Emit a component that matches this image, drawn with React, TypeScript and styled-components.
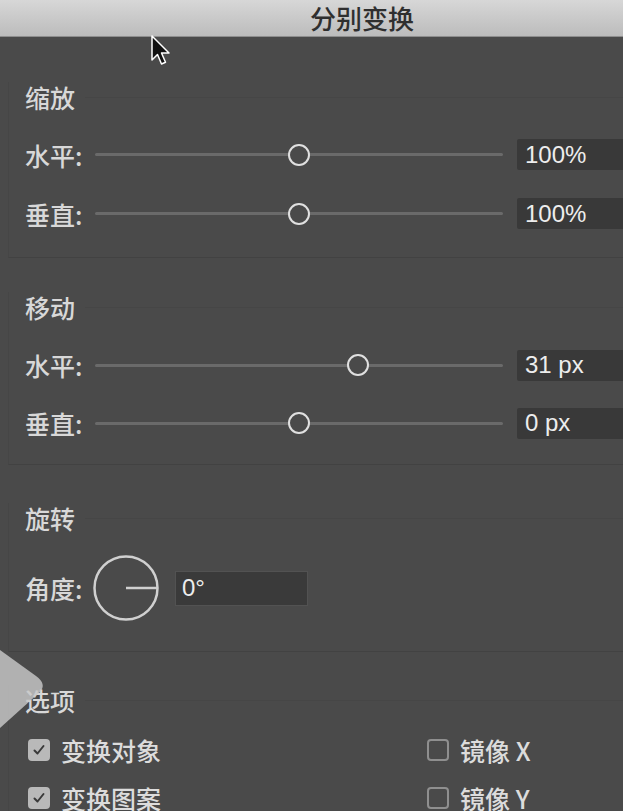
import React from 'react';
import styled, { createGlobalStyle } from 'styled-components';

const GlobalStyle = createGlobalStyle`
  html, body {
    margin: 0;
    padding: 0;
    background: #4a4a4a;
    overflow: hidden;
  }
  body {
    font-family: "Noto Sans CJK SC", "Noto Sans", sans-serif;
  }
`;

const Window = styled.div`
  position: relative;
  width: 724px;
  height: 811px;
  overflow: hidden;
  background: #4a4a4a;
  display: flex;
  flex-direction: column;
`;

const TitleBar = styled.div`
  height: 36px;
  flex-shrink: 0;
  display: flex;
  align-items: center;
  justify-content: center;
  background: linear-gradient(#d7d7d7, #bcbcbc);
  border-bottom: 1px solid #8e8e8e;
  font-size: 26px;
  font-weight: 500;
  color: #2f2f2f;
  line-height: 36px;
`;

const Body = styled.div`
  display: flex;
  flex-direction: column;
  padding-left: 8px;
`;

const Section = styled.section<{ $top: number; $bottom: number }>`
  display: flex;
  flex-direction: column;
  margin-top: ${p => p.$top}px;
  padding: 0 0 ${p => p.$bottom}px 16px;
  border-left: 1px solid #464646;
  border-bottom: 1px solid #424242;
`;

const Header = styled.div<{ $after: number }>`
  display: flex;
  align-items: center;
  gap: 10px;
  height: 30px;
  margin-bottom: ${p => p.$after}px;
  font-size: 25px;
  font-weight: 500;
  line-height: 30px;
  color: #d8d8d8;

  &::after {
    content: '';
    flex: 1;
    height: 1px;
    background: #464646;
  }
`;

const SliderRow = styled.div<{ $h: number }>`
  display: grid;
  grid-template-columns: 70px 408px 134px;
  align-items: center;
  height: ${p => p.$h}px;
`;

const Label = styled.span<{ $w?: number }>`
  font-size: 25px;
  font-weight: 500;
  color: #d8d8d8;
  white-space: nowrap;
  ${p => (p.$w ? `width: ${p.$w}px; flex-shrink: 0;` : '')}
`;

const Track = styled.div`
  position: relative;
  height: 3px;
  border-radius: 2px;
  background: #6a6a6a;
`;

const Thumb = styled.div`
  position: absolute;
  top: 50%;
  width: 22px;
  height: 22px;
  box-sizing: border-box;
  border: 2.5px solid #e0e0e0;
  border-radius: 50%;
  background: #4a4a4a;
  transform: translate(-50%, -50%);
`;

const ValueBox = styled.div`
  height: 31px;
  margin-left: 14px;
  display: flex;
  align-items: center;
  padding-left: 8px;
  background: #393939;
  border-radius: 2px;
  font-family: "Liberation Sans", Arial, sans-serif;
  font-size: 24px;
  color: #ededed;
`;

const AngleRow = styled.div`
  display: flex;
  align-items: center;
  height: 70px;
`;

const AngleBox = styled.div`
  width: 133px;
  height: 35px;
  box-sizing: border-box;
  margin-left: 16px;
  display: flex;
  align-items: center;
  padding-left: 6px;
  background: #3a3a3a;
  border: 1px solid #525252;
  font-family: "Liberation Sans", Arial, sans-serif;
  font-size: 24px;
  color: #ededed;
`;

const Options = styled.div`
  display: grid;
  grid-template-columns: 399px auto;
  grid-auto-rows: 48px;
  margin-left: 3px;
`;

const Check = styled.label`
  display: flex;
  align-items: center;
  gap: 11px;
  font-size: 25px;
  font-weight: 500;
  color: #dcdcdc;
`;

const Box = styled.span<{ $on: boolean }>`
  width: 22px;
  height: 22px;
  box-sizing: border-box;
  border-radius: 4px;
  display: flex;
  align-items: center;
  justify-content: center;
  background: ${p => (p.$on ? '#b9b9b9' : 'transparent')};
  border: 2px solid ${p => (p.$on ? '#b9b9b9' : '#8f8f8f')};
`;

const Cursor = styled.svg`
  position: absolute;
  left: 150px;
  top: 34px;
`;

const PlayShape = styled.svg`
  position: absolute;
  left: 0;
  top: 648px;
`;

type SliderProps = { label: string; value: string; pos: number; h: number };

function Slider({ label, value, pos, h }: SliderProps) {
  return (
    <SliderRow $h={h}>
      <Label>{label}</Label>
      <Track>
        <Thumb style={{ left: `${pos * 100}%` }} />
      </Track>
      <ValueBox>{value}</ValueBox>
    </SliderRow>
  );
}

function Option({ on, text }: { on: boolean; text: string }) {
  return (
    <Check>
      <Box $on={on}>
        {on && (
          <svg width="14" height="14" viewBox="0 0 14 14">
            <path d="M2.5 7.5 L5.5 10.5 L11.5 3" fill="none" stroke="#3a3a3a" strokeWidth="2" strokeLinecap="round" strokeLinejoin="round" />
          </svg>
        )}
      </Box>
      {text}
    </Check>
  );
}

export default function App() {
  return (
    <>
      <GlobalStyle />
      <Window>
        <TitleBar>分别变换</TitleBar>
        <Body>
          <Section $top={45} $bottom={14}>
            <Header $after={13}>缩放</Header>
            <Slider label="水平:" value="100%" pos={0.5} h={59} />
            <Slider label="垂直:" value="100%" pos={0.5} h={59} />
          </Section>

          <Section $top={34} $bottom={12}>
            <Header $after={14}>移动</Header>
            <Slider label="水平:" value="31 px" pos={0.645} h={58} />
            <Slider label="垂直:" value="0 px" pos={0.5} h={58} />
          </Section>

          <Section $top={38} $bottom={28}>
            <Header $after={20}>旋转</Header>
            <AngleRow>
              <Label $w={68}>角度:</Label>
              <svg width="66" height="66" viewBox="0 0 66 66">
                <circle cx="33" cy="33" r="31.5" fill="none" stroke="#d0d0d0" strokeWidth="2.5" />
                <line x1="33" y1="33" x2="64" y2="33" stroke="#d0d0d0" strokeWidth="2.5" />
              </svg>
              <AngleBox>0°</AngleBox>
            </AngleRow>
          </Section>

          <Section $top={33} $bottom={0}>
            <Header $after={11}>选项</Header>
            <Options>
              <Option on text="变换对象" />
              <Option on={false} text="镜像 X" />
              <Option on text="变换图案" />
              <Option on={false} text="镜像 Y" />
            </Options>
          </Section>
        </Body>

        <PlayShape width="52" height="84" viewBox="0 0 52 84">
          <path d="M0 2 L36 28 Q47 36 40 44 L0 80 Z" fill="rgba(200,200,200,0.82)" />
        </PlayShape>

        <Cursor width="24" height="34" viewBox="0 0 24 34">
          <path d="M2 2 L2 26 L7.5 20.5 L11.5 30 L15.5 28.3 L11.5 19 L19 19 Z" fill="#111" stroke="#fff" strokeWidth="1.5" strokeLinejoin="round" />
        </Cursor>
      </Window>
    </>
  );
}
